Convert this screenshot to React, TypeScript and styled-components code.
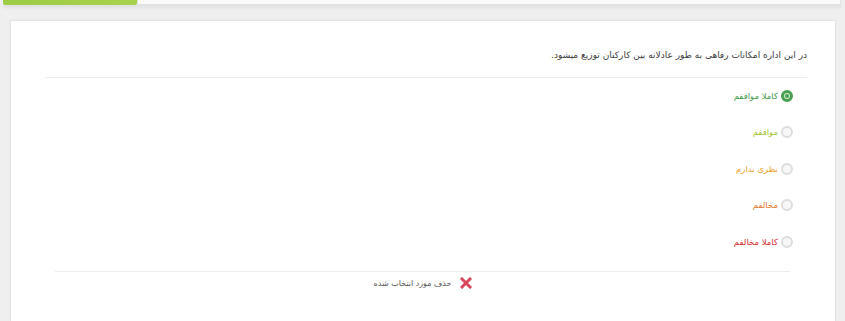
import React from 'react';
import styled, {createGlobalStyle} from "styled-components";

const GlobalStyle = createGlobalStyle`
    html, body {
        margin: 0;
        padding: 0;
        background-color: #efefef;
        font-family: "DejaVu Sans", "Noto Sans", sans-serif;
    }
`

type Option = { label: string; color: string; checked?: boolean }

const options: Option[] = [
    {label: 'کاملا موافقم', color: '#3f9a4c', checked: true},
    {label: 'موافقم', color: '#a3c23a'},
    {label: 'نظری ندارم', color: '#eea12a'},
    {label: 'مخالفم', color: '#e2782c'},
    {label: 'کاملا مخالفم', color: '#d42d2d'},
]

export default function App() {
    return (
        <Page>
            <GlobalStyle/>
            <TopBar>
                <Progress/>
                <Track/>
            </TopBar>
            <Card>
                <Question>در این اداره امکانات رفاهی به طور عادلانه بین کارکنان توزیع میشود.</Question>
                <Divider/>
                <Options>
                    {options.map((o) => (
                        <OptionRow key={o.label} color={o.color}>
                            <Radio checked={!!o.checked}/>
                            <span>{o.label}</span>
                        </OptionRow>
                    ))}
                </Options>
                <Footer>
                    <ClearButton>
                        <svg width="12" height="12" viewBox="0 0 12 12">
                            <path d="M2 2 L10 10 M10 2 L2 10" stroke="#d9465c" strokeWidth="3" strokeLinecap="square"/>
                        </svg>
                        <span>حذف مورد انتخاب شده</span>
                    </ClearButton>
                </Footer>
            </Card>
        </Page>
    );
}

const Page = styled.div`
    width: 845px;
    height: 321px;
    overflow: hidden;
    display: flex;
    flex-direction: column;
`

const TopBar = styled.div`
    display: flex;
    height: 5px;
    margin: 0 4px 0 3px;
    box-shadow: 0 3px 3px rgba(0, 0, 0, 0.06);
`

const Progress = styled.div`
    width: 134px;
    background: linear-gradient(90deg, #9dcc45, #a8d24e);
    border-radius: 0 0 2px 2px;
`

const Track = styled.div`
    flex: 1;
    background-color: #fafafa;
    border: 1px solid #e2e2e2;
    border-top: none;
`

const Card = styled.div`
    margin: 15px 9px 0 10px;
    flex: 1;
    background-color: #ffffff;
    border: 1px solid #e4e4e4;
    border-bottom: none;
    box-shadow: 0 0 2px rgba(0, 0, 0, 0.05);
    direction: rtl;
    padding: 27px 28px 0 34px;
`

const Question = styled.div`
    font-size: 9px;
    color: #3c3c3c;
    line-height: 14px;
`

const Divider = styled.div`
    height: 1px;
    background-color: #ececec;
    margin-top: 15px;
`

const Options = styled.div`
    display: flex;
    flex-direction: column;
    gap: 21.5px;
    padding: 10px 14px 0 0;
`

const OptionRow = styled.label<{ color: string }>`
    display: flex;
    align-items: center;
    gap: 3px;
    height: 15px;
    font-size: 8.5px;
    color: ${(p) => p.color};
`

const Radio = styled.span<{ checked: boolean }>`
    width: 12px;
    height: 12px;
    box-sizing: border-box;
    border-radius: 50%;
    border: ${(p) => (p.checked ? '3px solid #48a052' : '2px solid #dddddd')};
    background-color: ${(p) => (p.checked ? '#d7ecd2' : '#f7f7f7')};
    position: relative;

    &::after {
        content: '';
        display: ${(p) => (p.checked ? 'block' : 'none')};
        position: absolute;
        inset: 1px;
        border-radius: 50%;
        background-color: #48a052;
    }
`

const Footer = styled.div`
    margin: 22px 17px 0 10px;
    border-top: 1px solid #ececec;
    display: flex;
    justify-content: center;
    padding-top: 5px;
`

const ClearButton = styled.div`
    display: flex;
    align-items: center;
    gap: 8px;
    font-size: 8px;
    color: #555555;
`
